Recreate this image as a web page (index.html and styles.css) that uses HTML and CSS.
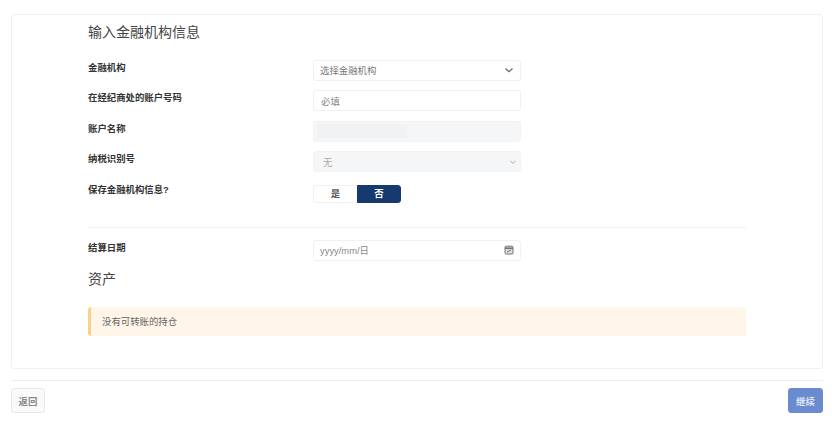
FILE: index.html
```html
<!DOCTYPE html>
<html lang="zh-CN">
<head>
<meta charset="UTF-8">
<title>输入金融机构信息</title>
<link rel="stylesheet" href="styles.css">
</head>
<body>
<div class="card">
  <div class="inner">
    <h2 class="title">输入金融机构信息</h2>
    <div class="row">
      <label class="label">金融机构</label>
      <div class="field select">
        <span>选择金融机构</span>
        <svg class="chev" width="10" height="10" viewBox="0 0 10 10"><path d="M1.5 3.5 5 6.8 8.5 3.5" fill="none" stroke="#666" stroke-width="1.2"/></svg>
      </div>
    </div>
    <div class="row">
      <label class="label">在经纪商处的账户号码</label>
      <div class="field"><span class="hint">必填</span></div>
    </div>
    <div class="row">
      <label class="label">账户名称</label>
      <div class="field off mask-wrap"><span class="mask"></span></div>
    </div>
    <div class="row">
      <label class="label">纳税识别号</label>
      <div class="field off select">
        <span class="none">无</span>
        <svg width="8" height="8" viewBox="0 0 8 8"><path d="M1.5 3 4 5.4 6.5 3" fill="none" stroke="#aaa" stroke-width="1"/></svg>
      </div>
    </div>
    <div class="row">
      <label class="label">保存金融机构信息?</label>
      <div class="toggle">
        <span class="opt">是</span>
        <span class="opt on">否</span>
      </div>
    </div>
    <hr class="line">
    <div class="row">
      <label class="label">结算日期</label>
      <div class="field select date">
        <span>yyyy/mm/日</span>
        <svg width="10" height="10" viewBox="0 0 10 10"><rect x="1" y="1.2" width="8" height="7.8" rx="1" fill="#ddd" stroke="#777"/><path d="M1 3.2H9" stroke="#666" stroke-width="1.4"/><path d="M3 6.8 7 5" stroke="#777"/></svg>
      </div>
    </div>
    <h2 class="title sub">资产</h2>
    <div class="notice">没有可转账的持仓</div>
  </div>
</div>
<div class="footer">
  <button class="btn">返回</button>
  <button class="btn next">继续</button>
</div>
</body>
</html>
```

FILE: styles.css
```css
body {
  margin: 0;
  padding: 14px 9px 0 11px;
  background-color: #fff;
  color: #333;
  font-family: "Liberation Sans", "Noto Sans CJK SC", sans-serif;
  font-size: 9.4px;
}
.card {
  height: 355px;
  box-sizing: border-box;
  border: 1px solid #f0f0f0;
  border-radius: 3px;
  padding: 0 76px;
}
.title {
  margin: 8px 0 18.5px;
  height: 18px;
  line-height: 18px;
  font-size: 14px;
  font-weight: 400;
  color: #444;
}
.row {
  display: flex;
  height: 21px;
  margin-bottom: 9.5px;
}
.label {
  width: 225px;
  line-height: 16px;
  font-weight: 700;
  color: #333;
}
.field {
  box-sizing: border-box;
  width: 208px;
  height: 21px;
  padding: 0 6px;
  display: flex;
  align-items: center;
  border: 1px solid #f0f0f0;
  border-radius: 3px;
  color: #777;
}
.select {
  justify-content: space-between;
}
.hint {
  margin-left: 1px;
  color: #888;
}
.off {
  background-color: #f5f6f7;
  border-color: #f3f3f3;
}
.off.select {
  padding: 0 3px 0 9px;
}
.none {
  color: #aaa;
}
.mask-wrap {
  padding: 0 3px;
}
.mask {
  width: 90px;
  height: 14px;
  background-color: #f1f2f3;
}
.date span {
  color: #888;
}
.toggle {
  display: flex;
  height: 18px;
  margin-top: 3px;
}
.opt {
  box-sizing: border-box;
  width: 44px;
  line-height: 16px;
  text-align: center;
  font-weight: 700;
  color: #555;
  border: 1px solid #f0f0f0;
  border-right: 0;
  border-radius: 3px 0 0 3px;
}
.opt.on {
  background-color: #163a70;
  color: #fff;
  border: 1px solid #163a70;
  border-radius: 0 3px 3px 0;
}
.line {
  margin: 24px 0 12px;
  border: 0;
  border-top: 1px solid #f0f0f0;
}
.sub {
  margin: 0 0 19px;
}
.notice {
  height: 29px;
  line-height: 29px;
  box-sizing: border-box;
  padding-left: 11px;
  background-color: #fff5e8;
  border-left: 3px solid #fbd08a;
  border-radius: 3px;
  color: #666;
}
.footer {
  margin-top: 11px;
  padding-top: 7px;
  border-top: 1px solid #eee;
  display: flex;
  justify-content: space-between;
}
.btn {
  height: 25px;
  width: 34px;
  padding: 0;
  font-family: inherit;
  font-size: 9.4px;
  font-weight: 700;
  color: #888;
  background-color: #fafafa;
  border: 1px solid #e9e9e9;
  border-radius: 3px;
}
.next {
  width: 35px;
  color: #dfe6f6;
  background-color: #6a8bd0;
  border-color: #6a8bd0;
}
```
